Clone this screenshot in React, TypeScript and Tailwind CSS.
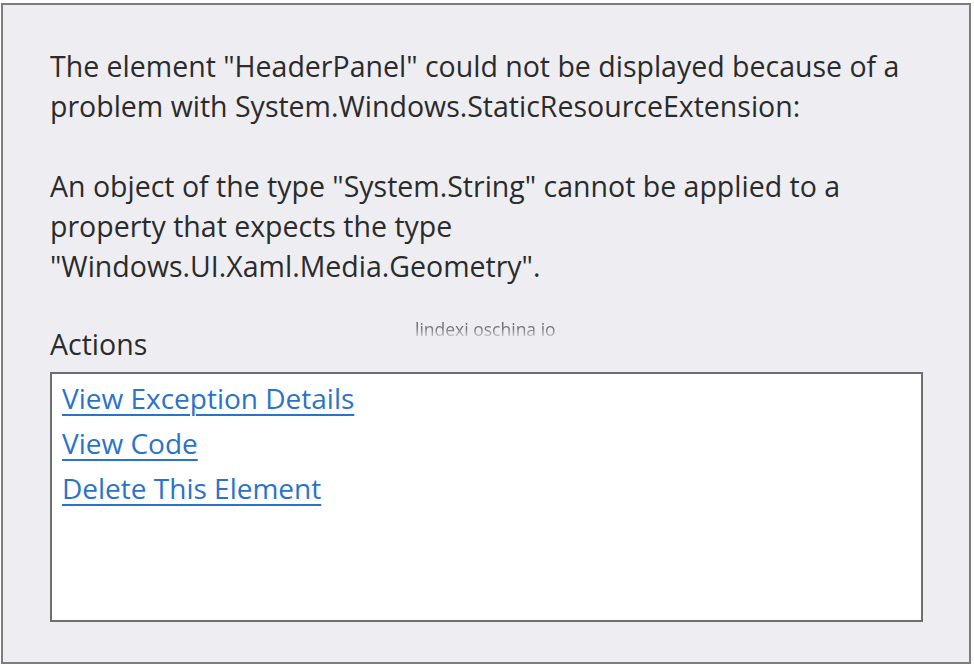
import { FC } from "react";

const font = { fontFamily: '"Open Sans", "Noto Sans", sans-serif' };

const App: FC = () => {
  return (
    <div className="w-[974px] h-[666px] bg-white relative overflow-hidden" style={font}>
      {/* Dialog */}
      <div className="absolute left-[1px] top-[3px] w-[970px] h-[661px] bg-[#eeeef2] border-2 border-[#7d7d7d] pl-[47px] pr-[20px] pt-[41px] text-[#2b2b2b]">
        <p className="text-[28.5px] leading-[40px] whitespace-nowrap">
          The element "HeaderPanel" could not be displayed because of a
          <br />
          problem with System.Windows.StaticResourceExtension:
        </p>
        <p className="mt-[40px] text-[28.5px] leading-[40px] whitespace-nowrap">
          An object of the type "System.String" cannot be applied to a
          <br />
          property that expects the type
          <br />
          "Windows.UI.Xaml.Media.Geometry".
        </p>
        <div className="mt-[38px] text-[28.5px] leading-[40px]">Actions</div>
        <div className="mt-[8px] w-[873px] h-[250px] bg-white border-2 border-[#6e6e6e] px-[10px] pt-[2px] flex flex-col">
          {["View Exception Details", "View Code", "Delete This Element"].map((t) => (
            <a key={t} href="#" className="text-[28px] leading-[45px] text-[#2b73c9] underline underline-offset-[5px] decoration-2 w-fit whitespace-nowrap">
              {t}
            </a>
          ))}
        </div>
      </div>

      {/* Watermark */}
      <div className="absolute left-[415px] top-[318px] text-[17.5px] leading-[22px] bg-linear-to-b from-[#555555] via-[#777777] to-[#eeeef2] bg-clip-text text-transparent">
        lindexi oschina io
      </div>
    </div>
  );
};

export default App;
